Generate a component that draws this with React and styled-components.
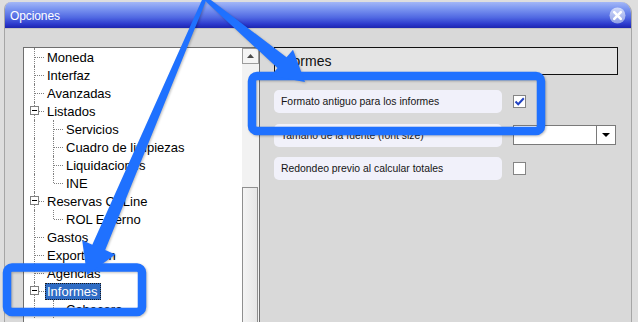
import React from 'react';
import styled, { createGlobalStyle } from 'styled-components';

const GlobalStyle = createGlobalStyle`
  html, body {
    margin: 0;
    padding: 0;
    background: #dedede;
    overflow: hidden;
  }
  body {
    font-family: "Liberation Sans", Arial, sans-serif;
  }
`;

const Stage = styled.div`
  position: relative;
  width: 638px;
  height: 322px;
  overflow: hidden;
  box-sizing: border-box;
  padding: 2px 0 0 4px;
  background: #dedede;
`;

const Window = styled.div`
  width: 628px;
  height: 340px;
  box-sizing: border-box;
  display: flex;
  flex-direction: column;
  background: #d9d9d9;
  border: 1px solid #a6a6a6;
  border-top: none;
  border-radius: 7px 11px 0 0;
  overflow: hidden;
`;

const TitleBar = styled.div`
  height: 26px;
  flex: none;
  display: flex;
  align-items: center;
  justify-content: space-between;
  padding: 0 5px 0 5px;
  background: linear-gradient(to bottom, #a3b7f7 0%, #7d97f1 25%, #5068e2 60%, #2c3acd 85%, #1d25ae 100%);
  border-bottom: 1px solid #c4c4c4;
`;

const Title = styled.span`
  color: #fff;
  font-size: 12px;
  letter-spacing: -0.1px;
  padding-top: 1px;
`;

const Body = styled.div`
  flex: 1;
  display: flex;
  align-items: flex-start;
  padding: 18px 0 0 18px;
`;

const TreePanel = styled.div`
  width: 237px;
  height: 300px;
  flex: none;
  box-sizing: border-box;
  border: 1px solid #6f6f6f;
  background: #fff;
  display: flex;
`;

const TreeList = styled.div`
  flex: 1;
  padding-left: 1px;
`;

const TreeRow = styled.div`
  display: flex;
  align-items: center;
  height: 18px;
`;

const Indent = styled.div`
  position: relative;
  width: 19px;
  height: 18px;
  flex: none;
  &::before {
    content: '';
    display: ${p => (p.$vert === 'none' ? 'none' : 'block')};
    position: absolute;
    left: 9px;
    top: 0;
    height: ${p => (p.$vert === 'top' ? '9px' : '18px')};
    border-left: 1px dotted #808080;
  }
  &::after {
    content: '';
    display: ${p => (p.$hook ? 'block' : 'none')};
    position: absolute;
    left: 10px;
    top: 9px;
    width: 9px;
    border-top: 1px dotted #808080;
  }
`;

const Expander = styled.span`
  position: absolute;
  z-index: 1;
  left: 5px;
  top: 4px;
  width: 9px;
  height: 9px;
  box-sizing: border-box;
  border: 1px solid #808080;
  background: #fff;
  &::after {
    content: '';
    position: absolute;
    left: 1px;
    top: 3px;
    width: 5px;
    height: 1px;
    background: #000;
  }
`;

const NodeLabel = styled.span`
  margin-left: 1px;
  height: 17px;
  line-height: 16px;
  padding: 0 2px 0 1px;
  box-sizing: border-box;
  font-size: 13px;
  white-space: nowrap;
  color: ${p => (p.$selected ? '#fff' : '#000')};
  background: ${p => (p.$selected ? '#2f6cc4' : 'transparent')};
  border: 1px dotted ${p => (p.$selected ? '#1a1a1a' : 'transparent')};
`;

const ScrollBar = styled.div`
  width: 17px;
  flex: none;
  display: flex;
  flex-direction: column;
  background: #f3f3f3;
`;

const ScrollButton = styled.div`
  height: 16px;
  box-sizing: border-box;
  border: 1px solid #9c9c9c;
  background: #f4f4f4;
  display: flex;
  align-items: center;
  justify-content: center;
`;

const ScrollTrack = styled.div`
  height: 123px;
  background: #f2f2f2;
`;

const ScrollThumb = styled.div`
  flex: 1;
  width: 16px;
  box-sizing: border-box;
  border: 1px solid #8f8f8f;
  border-bottom: none;
  background: linear-gradient(to right, #f4f4f4, #e6e6e6);
`;

const RightPane = styled.div`
  flex: 1;
  padding: 0 13px 0 14px;
`;

const SectionHeader = styled.div`
  height: 28px;
  box-sizing: border-box;
  border: 1px solid #111;
  background: #e4e4e4;
  font-size: 14px;
  line-height: 26px;
  padding-left: 2px;
  color: #111;
`;

const Options = styled.div`
  margin-top: 15px;
  display: flex;
  flex-direction: column;
  gap: 10.5px;
`;

const OptionRow = styled.div`
  display: flex;
  align-items: center;
  gap: 11px;
`;

const OptionLabel = styled.div`
  width: 228px;
  height: 23px;
  box-sizing: border-box;
  padding-left: 7px;
  display: flex;
  align-items: center;
  border-radius: 5px;
  background: #f1f1fa;
  font-size: 10.4px;
  color: #151515;
  white-space: nowrap;
`;

const CheckBox = styled.div`
  width: 13px;
  height: 13px;
  box-sizing: border-box;
  border: 1px solid #848484;
  background: #fff;
  display: flex;
  align-items: center;
  justify-content: center;
`;

const Select = styled.div`
  width: 103px;
  height: 20px;
  box-sizing: border-box;
  border: 1px solid #7a7a7a;
  background: #fff;
  display: flex;
  justify-content: flex-end;
`;

const SelectButton = styled.div`
  width: 18px;
  border-left: 1px solid #7a7a7a;
  display: flex;
  align-items: center;
  justify-content: center;
`;

const Overlay = styled.svg`
  position: absolute;
  left: 0;
  top: 0;
  pointer-events: none;
  filter: drop-shadow(1px 1px 1px rgba(0, 0, 0, 0.25));
`;

const tree = [
  { label: 'Moneda', level: 0 },
  { label: 'Interfaz', level: 0 },
  { label: 'Avanzadas', level: 0 },
  { label: 'Listados', level: 0, open: true },
  { label: 'Servicios', level: 1 },
  { label: 'Cuadro de limpiezas', level: 1 },
  { label: 'Liquidaciones', level: 1 },
  { label: 'INE', level: 1, last: true },
  { label: 'Reservas OnLine', level: 0, open: true },
  { label: 'ROL Externo', level: 1, last: true },
  { label: 'Gastos', level: 0 },
  { label: 'Exportación', level: 0 },
  { label: 'Agencias', level: 0 },
  { label: 'Informes', level: 0, open: true, selected: true },
  { label: 'Cabecera', level: 1 },
];

function TreeNode({ node }) {
  return (
    <TreeRow>
      {node.level === 0 ? (
        <Indent $vert="full" $hook>
          {node.open && <Expander />}
        </Indent>
      ) : (
        <>
          <Indent $vert="full" />
          <Indent $vert={node.last ? 'top' : 'full'} $hook />
        </>
      )}
      <NodeLabel $selected={node.selected}>{node.label}</NodeLabel>
    </TreeRow>
  );
}

// arrow shaft tapers from the common origin towards the head
function arrowPoints(ox, oy, tx, ty, headLen, headHalf, tailHalf, neckHalf) {
  const dx = tx - ox;
  const dy = ty - oy;
  const len = Math.hypot(dx, dy);
  const ux = dx / len;
  const uy = dy / len;
  const nx = -uy;
  const ny = ux;
  const bx = tx - ux * headLen;
  const by = ty - uy * headLen;
  const pts = [
    [ox + nx * tailHalf, oy + ny * tailHalf],
    [bx + nx * neckHalf, by + ny * neckHalf],
    [bx + nx * headHalf, by + ny * headHalf],
    [tx, ty],
    [bx - nx * headHalf, by - ny * headHalf],
    [bx - nx * neckHalf, by - ny * neckHalf],
    [ox - nx * tailHalf, oy - ny * tailHalf],
  ];
  return pts.map(p => p.map(v => v.toFixed(1)).join(',')).join(' ');
}

export default function App() {
  const blue = '#1f71ff';
  return (
    <>
      <GlobalStyle />
      <Stage>
        <Window>
          <TitleBar>
            <Title>Opciones</Title>
            <svg width="17" height="17" viewBox="0 0 17 17">
              <defs>
                <linearGradient id="closeGrad" x1="0" y1="0" x2="0" y2="1">
                  <stop offset="0" stopColor="#d3dcfb" />
                  <stop offset="1" stopColor="#8f9fe6" />
                </linearGradient>
              </defs>
              <circle cx="8.5" cy="8.5" r="8" fill="url(#closeGrad)" />
              <path d="M5.2 5.2 L11.8 11.8 M11.8 5.2 L5.2 11.8" stroke="#fff" strokeWidth="2.6" strokeLinecap="round" />
            </svg>
          </TitleBar>
          <Body>
            <TreePanel>
              <TreeList>
                {tree.map(node => (
                  <TreeNode key={node.label} node={node} />
                ))}
              </TreeList>
              <ScrollBar>
                <ScrollButton>
                  <svg width="7" height="4" viewBox="0 0 7 4">
                    <path d="M0 4 L3.5 0 L7 4 Z" fill="#4a4a4a" />
                  </svg>
                </ScrollButton>
                <ScrollTrack />
                <ScrollThumb />
              </ScrollBar>
            </TreePanel>
            <RightPane>
              <SectionHeader>Informes</SectionHeader>
              <Options>
                <OptionRow>
                  <OptionLabel>Formato antiguo para los informes</OptionLabel>
                  <CheckBox>
                    <svg width="11" height="11" viewBox="0 0 11 11">
                      <path d="M1.5 5.5 L4.2 8.2 L9.8 2.2" fill="none" stroke="#2243c2" strokeWidth="2" />
                    </svg>
                  </CheckBox>
                </OptionRow>
                <OptionRow>
                  <OptionLabel>Tamaño de la fuente (font size)</OptionLabel>
                  <Select>
                    <SelectButton>
                      <svg width="8" height="4" viewBox="0 0 8 4">
                        <path d="M0 0 L8 0 L4 4 Z" fill="#000" />
                      </svg>
                    </SelectButton>
                  </Select>
                </OptionRow>
                <OptionRow>
                  <OptionLabel>Redondeo previo al calcular totales</OptionLabel>
                  <CheckBox />
                </OptionRow>
              </Options>
            </RightPane>
          </Body>
        </Window>
        <Overlay width="638" height="322" viewBox="0 0 638 322">
          <rect x="252" y="76" width="289" height="55" rx="5" fill="none" stroke={blue} strokeWidth="8.5" />
          <rect x="7" y="267.5" width="135" height="44.5" rx="5" fill="none" stroke={blue} strokeWidth="8.5" />
          <polygon points={arrowPoints(205, -2, 305, 82, 30, 17, 2, 7)} fill={blue} />
          <polygon points={arrowPoints(205, -2, 87, 275, 30, 18, 2, 7)} fill={blue} />
        </Overlay>
      </Stage>
    </>
  );
}
